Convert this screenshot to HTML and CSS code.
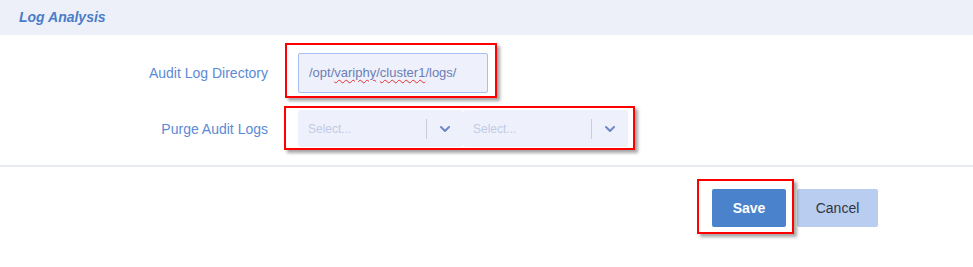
FILE: index.html
```html
<!DOCTYPE html>
<html>
<head>
<meta charset="utf-8">
<link rel="stylesheet" href="styles.css">
</head>
<body>
<div class="panel">
  <div class="panel-header">Log Analysis</div>
  <div class="form">
    <div class="row row-dir">
      <label class="label">Audit Log Directory</label>
      <div class="control">
        <div class="input">/opt/<span class="misspelled">variphy</span>/<span class="misspelled">cluster1</span>/logs/</div>
        <span class="mark mark-input"></span>
      </div>
    </div>
    <div class="row row-purge">
      <label class="label">Purge Audit Logs</label>
      <div class="control selects">
        <div class="select">
          <span class="placeholder">Select...</span>
          <span class="sep"></span>
          <span class="indicator"><svg width="10" height="6" viewBox="0 0 10 6"><path d="M1 1 L5 5 L9 1" fill="none" stroke="#6e88c9" stroke-width="2" stroke-linecap="round" stroke-linejoin="round"/></svg></span>
        </div>
        <div class="select">
          <span class="placeholder">Select...</span>
          <span class="sep"></span>
          <span class="indicator"><svg width="10" height="6" viewBox="0 0 10 6"><path d="M1 1 L5 5 L9 1" fill="none" stroke="#6e88c9" stroke-width="2" stroke-linecap="round" stroke-linejoin="round"/></svg></span>
        </div>
        <span class="mark mark-selects"></span>
      </div>
    </div>
  </div>
  <div class="footer">
    <div class="btn-wrap">
      <button class="btn btn-save">Save</button>
      <span class="mark mark-save"></span>
    </div>
    <button class="btn btn-cancel">Cancel</button>
  </div>
</div>
</body>
</html>
```
FILE: styles.css
```css
html, body {
  margin: 0;
  padding: 0;
  background: #ffffff;
  font-family: "Liberation Sans", Arial, sans-serif;
}
.panel {
  width: 973px;
  min-height: 267px;
}
.panel-header {
  height: 35px;
  background: #edf0f8;
  color: #4a7cc9;
  font-weight: bold;
  font-style: italic;
  font-size: 14px;
  line-height: 35px;
  padding-left: 19px;
}
.form {
  padding: 18px 0 18px 0;
  border-bottom: 2px solid #e7ebf0;
  display: flex;
  flex-direction: column;
  gap: 17px;
}
.row {
  display: flex;
  align-items: center;
  gap: 30px;
}
.label {
  width: 268px;
  text-align: right;
  color: #5b8ad6;
  font-size: 14px;
}
.control {
  position: relative;
}
.input {
  box-sizing: border-box;
  width: 190px;
  height: 40px;
  border: 1px solid #a4c0f4;
  border-radius: 2px;
  background: #eef1fb;
  color: #6b7db6;
  font-size: 13px;
  line-height: 38px;
  padding-left: 10px;
}
.misspelled {
  text-decoration: underline wavy #e03030;
  text-decoration-thickness: 1px;
  text-underline-offset: 2px;
}
.selects {
  display: flex;
}
.select {
  box-sizing: border-box;
  width: 165px;
  height: 37px;
  background: #eef1fb;
  border-radius: 3px;
  display: flex;
  align-items: center;
  padding-left: 10px;
}
.placeholder {
  flex: 1;
  color: #c2cbe6;
  font-size: 12px;
}
.sep {
  width: 1px;
  height: 20px;
  background: #c9ceda;
}
.indicator {
  width: 36px;
  display: flex;
  justify-content: center;
  align-items: center;
}
.mark {
  position: absolute;
  border: 2px solid #ff0000;
  box-shadow: 3px 3px 3px rgba(0, 0, 0, 0.35);
  pointer-events: none;
}
.mark-input {
  left: -13px;
  top: -10px;
  right: -9px;
  bottom: -5px;
}
.mark-selects {
  left: -14px;
  top: -4px;
  right: -7px;
  bottom: -3px;
}
.footer {
  display: flex;
  justify-content: flex-end;
  align-items: flex-start;
  gap: 11px;
  padding: 22px 95px 30px 0;
}
.btn-wrap {
  position: relative;
  display: flex;
}
.btn {
  border: none;
  border-radius: 2px;
  height: 38px;
  font-family: "Liberation Sans", Arial, sans-serif;
  font-size: 14px;
  padding: 0;
}
.btn-save {
  width: 74px;
  background: #4a82cc;
  color: #ffffff;
  font-weight: bold;
}
.btn-cancel {
  width: 81px;
  background: #b9cdf0;
  color: #2f3540;
}
.mark-save {
  left: -15px;
  top: -10px;
  right: -8px;
  bottom: -7px;
}
```
